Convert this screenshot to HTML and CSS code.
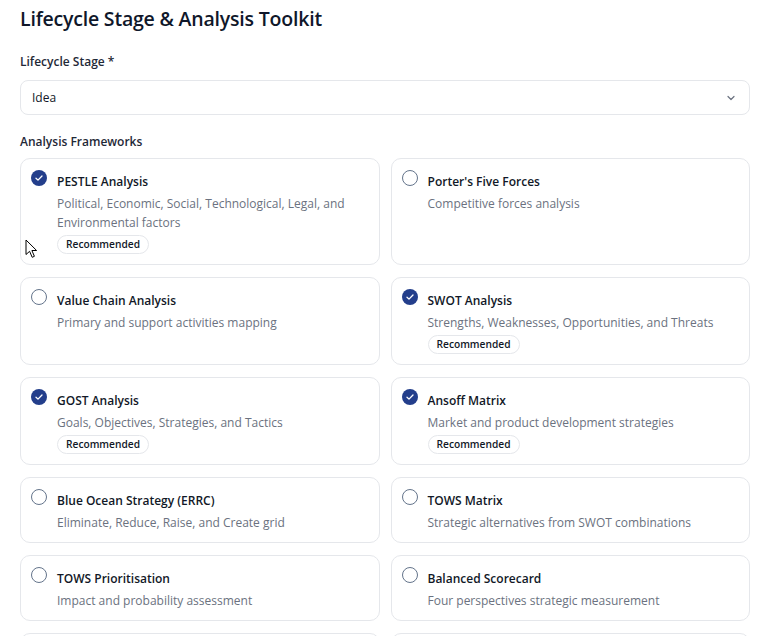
FILE: index.html
```html
<!DOCTYPE html>
<html lang="en">
<head>
<meta charset="utf-8">
<title>Lifecycle Stage &amp; Analysis Toolkit</title>
<link rel="stylesheet" href="styles.css">
</head>
<body>
<main class="page">
  <h1 class="title">Lifecycle Stage &amp; Analysis Toolkit</h1>

  <label class="label" for="stage">Lifecycle Stage *</label>
  <div class="select" id="stage">
    <span>Idea</span>
    <svg class="chev" width="12" height="12" viewBox="0 0 12 12" fill="none"><path d="M3 4.5 6 7.5 9 4.5" stroke="#6b7280" stroke-width="1.2" stroke-linecap="round" stroke-linejoin="round"/></svg>
  </div>

  <div class="label label-fw">Analysis Frameworks</div>

  <div class="grid">
    <div class="card">
      <span class="radio checked"><svg width="16" height="16" viewBox="0 0 16 16"><circle cx="8" cy="8" r="8" fill="#233e8b"/><path d="M5 8.2 7 10.1 11 6" stroke="#fff" stroke-width="1.3" fill="none" stroke-linecap="round" stroke-linejoin="round"/></svg></span>
      <div class="body">
        <div class="name">PESTLE Analysis</div>
        <div class="desc">Political, Economic, Social, Technological, Legal, and Environmental factors</div>
        <span class="badge">Recommended</span>
      </div>
    </div>
    <div class="card">
      <span class="radio"></span>
      <div class="body">
        <div class="name">Porter's Five Forces</div>
        <div class="desc">Competitive forces analysis</div>
      </div>
    </div>
    <div class="card">
      <span class="radio"></span>
      <div class="body">
        <div class="name">Value Chain Analysis</div>
        <div class="desc">Primary and support activities mapping</div>
      </div>
    </div>
    <div class="card">
      <span class="radio checked"><svg width="16" height="16" viewBox="0 0 16 16"><circle cx="8" cy="8" r="8" fill="#233e8b"/><path d="M5 8.2 7 10.1 11 6" stroke="#fff" stroke-width="1.3" fill="none" stroke-linecap="round" stroke-linejoin="round"/></svg></span>
      <div class="body">
        <div class="name">SWOT Analysis</div>
        <div class="desc">Strengths, Weaknesses, Opportunities, and Threats</div>
        <span class="badge">Recommended</span>
      </div>
    </div>
    <div class="card">
      <span class="radio checked"><svg width="16" height="16" viewBox="0 0 16 16"><circle cx="8" cy="8" r="8" fill="#233e8b"/><path d="M5 8.2 7 10.1 11 6" stroke="#fff" stroke-width="1.3" fill="none" stroke-linecap="round" stroke-linejoin="round"/></svg></span>
      <div class="body">
        <div class="name">GOST Analysis</div>
        <div class="desc">Goals, Objectives, Strategies, and Tactics</div>
        <span class="badge">Recommended</span>
      </div>
    </div>
    <div class="card">
      <span class="radio checked"><svg width="16" height="16" viewBox="0 0 16 16"><circle cx="8" cy="8" r="8" fill="#233e8b"/><path d="M5 8.2 7 10.1 11 6" stroke="#fff" stroke-width="1.3" fill="none" stroke-linecap="round" stroke-linejoin="round"/></svg></span>
      <div class="body">
        <div class="name">Ansoff Matrix</div>
        <div class="desc">Market and product development strategies</div>
        <span class="badge">Recommended</span>
      </div>
    </div>
    <div class="card">
      <span class="radio"></span>
      <div class="body">
        <div class="name">Blue Ocean Strategy (ERRC)</div>
        <div class="desc">Eliminate, Reduce, Raise, and Create grid</div>
      </div>
    </div>
    <div class="card">
      <span class="radio"></span>
      <div class="body">
        <div class="name">TOWS Matrix</div>
        <div class="desc">Strategic alternatives from SWOT combinations</div>
      </div>
    </div>
    <div class="card">
      <span class="radio"></span>
      <div class="body">
        <div class="name">TOWS Prioritisation</div>
        <div class="desc">Impact and probability assessment</div>
      </div>
    </div>
    <div class="card">
      <span class="radio"></span>
      <div class="body">
        <div class="name">Balanced Scorecard</div>
        <div class="desc">Four perspectives strategic measurement</div>
      </div>
    </div>
    <div class="card">
      <span class="radio"></span>
      <div class="body">
        <div class="name">McKinsey 7S Framework</div>
        <div class="desc">Organisational alignment analysis</div>
      </div>
    </div>
    <div class="card">
      <span class="radio"></span>
      <div class="body">
        <div class="name">BCG Matrix</div>
        <div class="desc">Portfolio growth and share analysis</div>
      </div>
    </div>
  </div>
</main>
<svg class="cursor" width="13" height="20" viewBox="0 0 13 20"><path d="M1 1 L1 15.5 L4.6 12.3 L7.2 18.3 L9.4 17.3 L6.9 11.5 L11.6 11.5 Z" fill="#fff" stroke="#000" stroke-width="1" stroke-linejoin="round"/></svg>
</body>
</html>
```

FILE: styles.css
```css
* { box-sizing: border-box; }

html, body {
  margin: 0;
  background: #ffffff;
}

body {
  font-family: "Open Sans", "Noto Sans", "Liberation Sans", sans-serif;
  color: #111827;
}

.page {
  width: 730px;
  margin: 0 0 0 20px;
  padding-top: 5px;
}

.title {
  margin: 0;
  font-size: 19.5px;
  line-height: 28px;
  font-weight: 600;
  color: #0f172a;
  letter-spacing: -0.2px;
}

.label {
  display: block;
  margin-top: 21px;
  font-size: 12px;
  line-height: 16px;
  font-weight: 600;
  color: #1f2937;
}

.label-fw {
  margin-top: 19px;
}

.select {
  margin-top: 10px;
  height: 35px;
  border: 1px solid #e5e7eb;
  border-radius: 8px;
  display: flex;
  align-items: center;
  justify-content: space-between;
  padding: 0 12px 0 11px;
  font-size: 12px;
  color: #111827;
}

.grid {
  margin-top: 8px;
  display: grid;
  grid-template-columns: 1fr 1fr;
  gap: 12px 11px;
}

.card {
  display: flex;
  align-items: flex-start;
  gap: 10px;
  border: 1px solid #e5e7eb;
  border-radius: 10px;
  padding: 12px 14px 10px 10px;
  min-height: 65px;
}

.radio {
  flex: none;
  width: 16px;
  height: 16px;
  border: 1.5px solid #64748b;
  border-radius: 50%;
  margin-top: -1px;
}

.radio.checked {
  border: none;
}

.radio svg { display: block; }

.body {
  display: flex;
  flex-direction: column;
  align-items: flex-start;
  min-width: 0;
}

.name {
  font-size: 12px;
  line-height: 20px;
  font-weight: 600;
  color: #111827;
  margin-top: 1px;
}

.desc {
  margin-top: 2px;
  font-size: 12px;
  line-height: 19px;
  color: #6b7280;
}

.badge {
  margin-top: 3px;
  height: 19px;
  padding: 0 8px;
  border: 1px solid #e5e7eb;
  border-radius: 999px;
  font-size: 10.2px;
  line-height: 17px;
  font-weight: 600;
  color: #111827;
}

.cursor {
  position: absolute;
  left: 25px;
  top: 239px;
}
```
